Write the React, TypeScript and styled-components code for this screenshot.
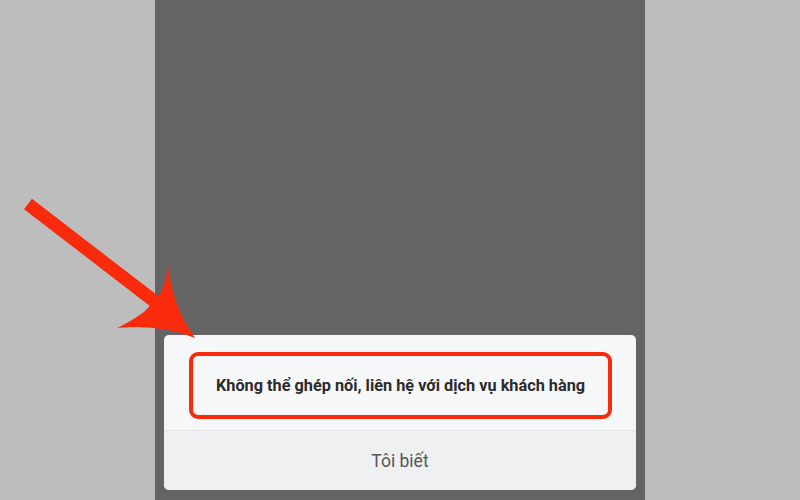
import * as React from 'react';
import styled, { createGlobalStyle } from 'styled-components';

const GlobalStyle = createGlobalStyle`
  html, body {
    margin: 0;
    padding: 0;
    background: #bdbdbd;
    font-family: Roboto, "Noto Sans", "Liberation Sans", sans-serif;
  }
  #root {
    height: 500px;
  }
`;

const App = () => {
  return <Page>
    <GlobalStyle/>
    <Phone>
      <Dialog>
        <Message>
          <Highlight>
            <MessageText>Không thể ghép nối, liên hệ với dịch vụ khách hàng</MessageText>
          </Highlight>
        </Message>
        <ActionButton>Tôi biết</ActionButton>
      </Dialog>
    </Phone>
    <Arrow viewBox="0 0 800 500" width={800} height={500}>
      <line x1={28} y1={204} x2={158} y2={304} stroke="#fa2a0c" strokeWidth={13}/>
      <path
        d="M 195 338 Q 172 306 168 265 Q 165 290 156 299 L 144 312 Q 130 322 117 328 Q 160 324 195 338 Z"
        fill="#fa2a0c"
      />
    </Arrow>
  </Page>;
};

const Page = styled.div`
  position: relative;
  height: 500px;
  width: 800px;
  display: flex;
  justify-content: center;
  overflow: hidden;
`;

const Phone = styled.div`
  width: 490px;
  height: 100%;
  background: #636463;
  display: flex;
  flex-direction: column;
  justify-content: flex-end;
  padding: 0 9px 10px;
  box-sizing: border-box;
`;

const Dialog = styled.div`
  background: #f6f7f9;
  border-radius: 5px;
  overflow: hidden;
  display: flex;
  flex-direction: column;
`;

const Message = styled.div`
  height: 96px;
  box-sizing: border-box;
  padding: 17px 24px 11px 25px;
  border-bottom: 1px solid #e2e3e5;
`;

const Highlight = styled.div`
  height: 100%;
  box-sizing: border-box;
  border: 4px solid #fa2a0c;
  border-radius: 9px;
  display: flex;
  align-items: center;
  justify-content: center;
`;

const MessageText = styled.div`
  font-size: 16.3px;
  font-weight: 700;
  color: #2b2b2b;
`;

const ActionButton = styled.div`
  height: 59px;
  background: #eff0f2;
  display: flex;
  align-items: center;
  justify-content: center;
  font-size: 17.5px;
  color: #555;
`;

const Arrow = styled.svg`
  position: absolute;
  left: 0;
  top: 0;
  pointer-events: none;
`;

export default App;
